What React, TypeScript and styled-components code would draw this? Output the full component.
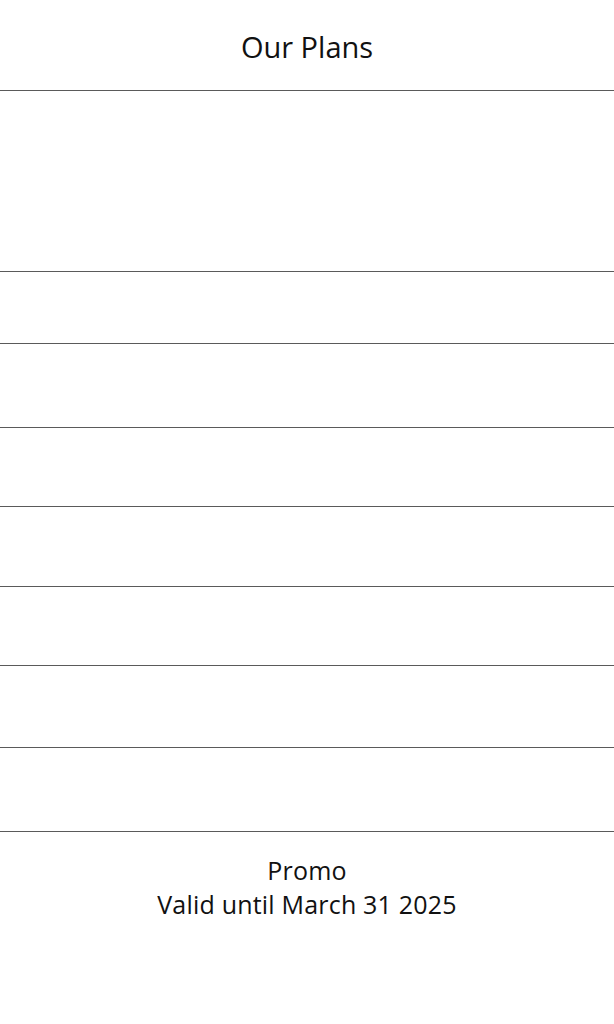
import React from 'react'
import styled, { createGlobalStyle } from 'styled-components'

const GlobalStyle = createGlobalStyle`
  html, body {
    margin: 0;
    padding: 0;
    background: #ffffff;
  }
  body {
    font-family: "Open Sans", "Liberation Sans", sans-serif;
    color: #111111;
  }
`

// heights of the empty plan rows, top to bottom
const rows = [71, 83, 78, 79, 78, 81, 83]

const App = () => {
  return (
    <>
      <GlobalStyle />
      <Page>
        <Header>
          <Title>Our Plans</Title>
        </Header>
        <Hero />
        {rows.map((h, i) => (
          <PlanRow key={i} $h={h} />
        ))}
        <Footer>
          <FooterLine>Promo</FooterLine>
          <FooterLine>Valid until March 31 2025</FooterLine>
        </Footer>
      </Page>
    </>
  )
}

export default App

const Page = styled.div`
  width: 614px;
  min-height: 1024px;
  display: flex;
  flex-direction: column;
  background: #ffffff;
`
const Header = styled.header`
  height: 90px;
  display: flex;
  align-items: center;
  justify-content: center;
  border-bottom: 1px solid #5a5a5a;
  box-sizing: content-box;
`
const Title = styled.h1`
  margin: 0;
  margin-top: 3px;
  font-size: 29px;
  font-weight: 400;
  letter-spacing: 0;
`
const Hero = styled.section`
  height: 180px;
  border-bottom: 1px solid #5a5a5a;
`
const PlanRow = styled.div<{ $h: number }>`
  height: ${(p) => p.$h}px;
  border-bottom: 1px solid #5a5a5a;
`
const Footer = styled.footer`
  display: flex;
  flex-direction: column;
  align-items: center;
  padding-top: 21px;
`
const FooterLine = styled.div`
  font-size: 25px;
  line-height: 34px;
  letter-spacing: 0.2px;
`
